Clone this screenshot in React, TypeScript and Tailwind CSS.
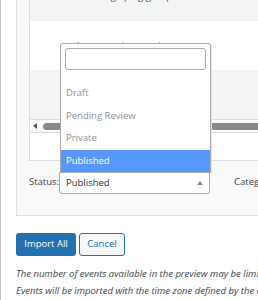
const font = { fontFamily: '"Open Sans", "Noto Sans", sans-serif' };

const options = ['Draft', 'Pending Review', 'Private', 'Published'];

const StatusDropdown = () => (
  <div className="absolute left-[59px] top-[43px] z-10 h-[130px] w-[151px] rounded-t-[3px] border border-[#aaaaaa] bg-white shadow-[1px_0_0_#e5e5e5]">
    <div className="p-[4px]">
      <div className="h-[22px] rounded-[3px] border border-[#aaaaaa] bg-white" />
    </div>
    <ul className="pt-[8px]">
      {options.map((opt) => (
        <li
          key={opt}
          className={`flex h-[22.5px] items-center px-[5px] text-[9.5px] ${opt === 'Published' ? 'bg-[#5897fb] text-white' : 'text-[#8c8f94]'}`}
        >
          {opt}
        </li>
      ))}
    </ul>
  </div>
);

export default function App() {
  return (
    <div className="relative h-[300px] w-[258px] overflow-hidden border-l border-[#c3c4c7] bg-white text-[#3c434a]" style={font}>
      <div className="ml-[15px] w-[320px] border-b border-l border-[#e0e0e0] bg-[#f9f9f9] pl-[12px]">
        <div className="border-b border-l border-[#dcdcde]">
          <div className="-mt-[27px] flex h-[48px] items-center bg-[#f3f4f4] pl-[50px] text-[9.5px] text-[#50575e]">
            Meetings/ping group
          </div>
          <div className="flex h-[49px] items-start whitespace-nowrap bg-white pl-[47px] pt-[18px] text-[9.5px] text-[#50575e]">
            lesson review session
          </div>
          <div className="h-[49px] bg-[#f3f4f4]" />
        </div>
        <div className="flex h-[12px] items-center border-l border-[#dcdcde] bg-[#fbfbfb] pl-[3px]">
          <span className="h-0 w-0 border-y-[3.5px] border-r-[4px] border-y-transparent border-r-[#555]" />
          <div className="ml-[6px] h-[7px] flex-1 rounded-[4px] bg-[#8a8a8a]" />
        </div>
        <div className="h-[29px] border border-r-0 border-[#dcdcde] bg-white" />
        <div className="flex h-[54px] items-start pt-[11px]">
          <span className="w-[30px] whitespace-nowrap pt-[3px] text-[9.5px]">Status:</span>
          <div className="flex h-[22px] w-[151px] shrink-0 items-center justify-between rounded-b-[3px] border border-[#aaaaaa] bg-white pl-[6px] pr-[6px] text-[9.5px] text-[#2c3338]">
            <span>Published</span>
            <span className="h-0 w-0 border-x-[3px] border-b-[4px] border-x-transparent border-b-[#888]" />
          </div>
          <span className="ml-[24px] whitespace-nowrap pt-[3px] text-[9.5px]">Category:</span>
        </div>
      </div>

      <div className="ml-[15px] mt-[17px] flex gap-[3px]">
        <button className="h-[23px] w-[60px] rounded-[3px] bg-[#2271b1] text-[9.5px] text-white">Import All</button>
        <button className="h-[23px] w-[46px] rounded-[3px] border border-[#2271b1] bg-[#f6f7f7] text-[9.5px] text-[#2271b1]">Cancel</button>
      </div>

      <div className="ml-[15px] mt-[9px] w-[400px] text-[9.5px] italic leading-[17px] text-[#3c434a]">
        <p>The number of events available in the preview may be limited.</p>
        <p>Events will be imported with the time zone defined by the calendar.</p>
      </div>

      <StatusDropdown />
    </div>
  );
}
